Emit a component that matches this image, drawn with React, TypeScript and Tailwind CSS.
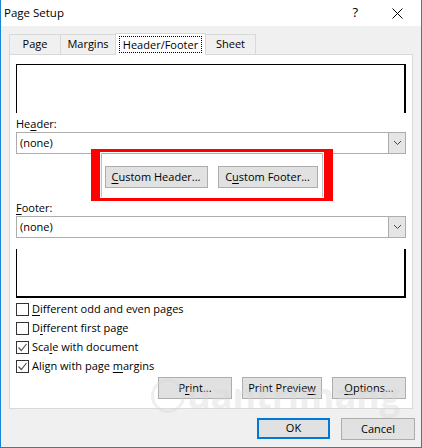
import React from "react";

const font = { fontFamily: '"Open Sans", "Noto Sans", sans-serif' };

function U({ children }: { children: React.ReactNode }) {
  return <span className="underline underline-offset-2">{children}</span>;
}

function Combo() {
  return (
    <div className="flex h-[22px] border border-[#adadad] bg-white">
      <div className="flex-1 pl-[3px] leading-[20px]">(none)</div>
      <div className="flex w-[17px] items-center justify-center border-l border-[#adadad] bg-[#e5e5e5]">
        <svg width="9" height="6" viewBox="0 0 9 6">
          <path d="M1 1l3.5 3.5L8 1" fill="none" stroke="#444" strokeWidth="1" />
        </svg>
      </div>
    </div>
  );
}

function Check({ checked, children }: { checked?: boolean; children: React.ReactNode }) {
  return (
    <div className="flex h-[19px] items-center gap-[3px]">
      <div className="flex h-[13px] w-[13px] items-center justify-center border border-[#333] bg-white">
        {checked && (
          <svg width="11" height="11" viewBox="0 0 11 11">
            <path d="M1.5 5.5l2.8 3L9.5 2" fill="none" stroke="#555" strokeWidth="1.2" />
          </svg>
        )}
      </div>
      <span>{children}</span>
    </div>
  );
}

function Btn({ children, className = "" }: { children: React.ReactNode; className?: string }) {
  return (
    <div
      className={`flex h-[22px] items-center justify-center border border-[#adadad] bg-[#e1e1e1] ${className}`}
    >
      {children}
    </div>
  );
}

export default function App() {
  return (
    <div
      className="relative h-[448px] w-[422px] overflow-hidden border-x border-b border-[#1883d7] bg-[#f0f0f0] text-[11px] text-black"
      style={font}
    >
      {/* title bar */}
      <div className="flex h-[26px] items-center bg-white pl-[3px]">
        <span className="flex-1 text-[11.5px]">Page Setup</span>
        <span className="mr-[34px] text-[13px]">?</span>
        <svg width="11" height="11" viewBox="0 0 11 11" className="mr-[18px]">
          <path d="M0.5 0.5l10 10M10.5 0.5l-10 10" stroke="#000" strokeWidth="1" />
        </svg>
      </div>

      {/* tabs */}
      <div className="mt-[7px] flex h-[21px] items-end pl-[8px]">
        <div className="flex h-[20px] w-[51px] items-center justify-center border-l border-t border-[#d9d9d9]">
          Page
        </div>
        <div className="flex h-[20px] w-[55px] items-center justify-center border-l border-t border-[#d9d9d9]">
          Margins
        </div>
        <div className="relative z-10 -mb-px flex h-[22px] w-[91px] items-center justify-center border-x border-t border-[#d9d9d9] bg-white">
          <span className="border border-dotted border-black px-[3px] leading-[15px]">Header/Footer</span>
        </div>
        <div className="flex h-[20px] w-[50px] items-center justify-center border-r border-t border-[#d9d9d9]">
          Sheet
        </div>
      </div>

      {/* panel */}
      <div className="relative ml-[8px] h-[355px] w-[404px] border border-[#d9d9d9] bg-white px-[6px] pt-[9px]">
        <div className="h-[49px] border-l border-r-2 border-t border-black" />
        <div className="mt-[3px] h-[16px] leading-[16px]">
          He<U>a</U>der:
        </div>
        <Combo />
        <div className="mt-[12px] flex justify-center gap-[10px]">
          <Btn className="w-[103px]">
            <span><U>C</U>ustom Header...</span>
          </Btn>
          <Btn className="w-[100px]">
            <span>C<U>u</U>stom Footer...</span>
          </Btn>
        </div>
        <div className="mt-[12px] h-[16px] leading-[16px]">
          <U>F</U>ooter:
        </div>
        <Combo />
        <div className="mt-[11px] h-[49px] border-b-2 border-l border-r-2 border-black" />
        <div className="mt-[2px]">
          <Check>
            <U>D</U>ifferent odd and even pages
          </Check>
          <Check>
            D<U>i</U>fferent first page
          </Check>
          <Check checked>
            Sca<U>l</U>e with document
          </Check>
          <Check checked>
            Align with page <U>m</U>argins
          </Check>
        </div>
        <div className="mt-[1px] flex justify-end gap-[10px]">
          <Btn className="w-[74px]">
            <span>P<U>r</U>int...</span>
          </Btn>
          <Btn className="w-[80px]">
            <span>Print Previe<U>w</U></span>
          </Btn>
          <Btn className="w-[74px]">
            <span><U>O</U>ptions...</span>
          </Btn>
        </div>

        {/* red annotation frame */}
        <div className="absolute left-[81px] top-[94px] h-[52px] w-[242px] border-x-[9px] border-y-[3px] border-[#ff0000]">
          <div className="h-full w-full border border-white">
            <div className="h-full w-full border-x border-[#c0c0c0]" />
          </div>
        </div>
      </div>

      {/* dialog buttons */}
      <div className="mt-[9px] flex justify-end gap-[11px] pr-[6px]">
        <div className="flex h-[21px] w-[73px] items-center justify-center border-2 border-[#0078d7] bg-[#e1e1e1]">
          OK
        </div>
        <Btn className="h-[21px] w-[74px]">Cancel</Btn>
      </div>

      {/* watermark */}
      <div className="pointer-events-none absolute left-[150px] top-[376px] flex h-[40px] items-center gap-[2px] text-[36px] font-bold leading-[36px] text-[#d8d8d8] opacity-40">
        <span className="h-[34px] w-[34px] rounded-full border-[3px] border-[#d8d8d8]" />
        <span>uantrimang</span>
      </div>
    </div>
  );
}
